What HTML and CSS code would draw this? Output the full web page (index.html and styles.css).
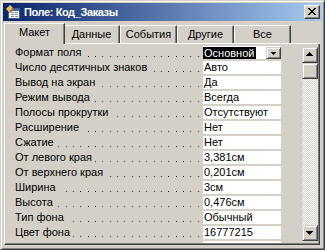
FILE: index.html
```html
<!DOCTYPE html>
<html>
<head>
<meta charset="utf-8">
<link rel="stylesheet" href="styles.css">
</head>
<body>
<div class="window">
  <div class="titlebar">
    <svg class="ticon" width="16" height="16" viewBox="0 0 16 16" shape-rendering="crispEdges">
      <rect x="3" y="4" width="12" height="11" fill="#4a5a88"/>
      <rect x="4" y="5" width="10" height="9" fill="#ffffff"/>
      <rect x="4" y="5" width="10" height="2" fill="#3a6ea5"/>
      <rect x="6" y="8" width="3" height="1" fill="#7b8fbf"/>
      <rect x="10" y="8" width="3" height="1" fill="#7b8fbf"/>
      <rect x="6" y="10" width="3" height="1" fill="#7b8fbf"/>
      <rect x="10" y="10" width="3" height="1" fill="#7b8fbf"/>
      <rect x="6" y="12" width="3" height="1" fill="#7b8fbf"/>
      <rect x="10" y="12" width="3" height="1" fill="#7b8fbf"/>
      <polygon points="1,5 5,1 8,4 4,8" fill="#e8c34a" shape-rendering="auto"/>
      <polygon points="4,8 8,4 9,5 5,9" fill="#9a6a1a" shape-rendering="auto"/>
    </svg>
    <span class="title">Поле: Код_Заказы</span>
    <div class="close">
      <svg class="xglyph" width="8" height="7" viewBox="0 0 8 7" shape-rendering="crispEdges">
        <rect x="0" y="0" width="2" height="1"/><rect x="6" y="0" width="2" height="1"/>
        <rect x="1" y="1" width="2" height="1"/><rect x="5" y="1" width="2" height="1"/>
        <rect x="2" y="2" width="4" height="1"/>
        <rect x="3" y="3" width="2" height="1"/>
        <rect x="2" y="4" width="4" height="1"/>
        <rect x="1" y="5" width="2" height="1"/><rect x="5" y="5" width="2" height="1"/>
        <rect x="0" y="6" width="2" height="1"/><rect x="6" y="6" width="2" height="1"/>
      </svg>
    </div>
  </div>
  <div class="tabs">
    <div class="tab active">Макет</div>
    <div class="tab">Данные</div>
    <div class="tab">События</div>
    <div class="tab">Другие</div>
    <div class="tab">Все</div>
  </div>
  <div class="panel">
    <div class="list">
      <div class="row"><div class="label"><span class="name">Формат поля</span></div><div class="value combo"><span class="sel">Основной</span><span class="drop"><svg class="darrow" width="5" height="3" viewBox="0 0 5 3" shape-rendering="crispEdges"><rect x="0" y="0" width="5" height="1"/><rect x="1" y="1" width="3" height="1"/><rect x="2" y="2" width="1" height="1"/></svg></span></div></div>
      <div class="row"><div class="label"><span class="name">Число десятичных знаков</span></div><div class="value">Авто</div></div>
      <div class="row"><div class="label"><span class="name">Вывод на экран</span></div><div class="value">Да</div></div>
      <div class="row"><div class="label"><span class="name">Режим вывода</span></div><div class="value">Всегда</div></div>
      <div class="row"><div class="label"><span class="name">Полосы прокрутки</span></div><div class="value">Отсутствуют</div></div>
      <div class="row"><div class="label"><span class="name">Расширение</span></div><div class="value">Нет</div></div>
      <div class="row"><div class="label"><span class="name">Сжатие</span></div><div class="value">Нет</div></div>
      <div class="row"><div class="label"><span class="name">От левого края</span></div><div class="value">3,381см</div></div>
      <div class="row"><div class="label"><span class="name">От верхнего края</span></div><div class="value">0,201см</div></div>
      <div class="row"><div class="label"><span class="name">Ширина</span></div><div class="value">3см</div></div>
      <div class="row"><div class="label"><span class="name">Высота</span></div><div class="value">0,476см</div></div>
      <div class="row"><div class="label"><span class="name">Тип фона</span></div><div class="value">Обычный</div></div>
      <div class="row"><div class="label"><span class="name">Цвет фона</span></div><div class="value">16777215</div></div>
      <div class="row"><div class="label"></div><div class="value"></div></div>
    </div>
    <div class="scroll">
      <div class="sbtn up"><svg class="arrow" width="7" height="4" viewBox="0 0 7 4" shape-rendering="crispEdges"><rect x="3" y="0" width="1" height="1"/><rect x="2" y="1" width="3" height="1"/><rect x="1" y="2" width="5" height="1"/><rect x="0" y="3" width="7" height="1"/></svg></div>
      <div class="thumb"></div>
      <div class="track"></div>
      <div class="sbtn down"><svg class="arrow" width="7" height="4" viewBox="0 0 7 4" shape-rendering="crispEdges"><rect x="0" y="0" width="7" height="1"/><rect x="1" y="1" width="5" height="1"/><rect x="2" y="2" width="3" height="1"/><rect x="3" y="3" width="1" height="1"/></svg></div>
    </div>
  </div>
</div>
</body>
</html>
```

FILE: styles.css
```css
* { box-sizing: border-box; }
html, body { margin: 0; padding: 0; }
body {
  width: 325px;
  height: 250px;
  overflow: hidden;
  background: #d4d0c8;
  font-family: "Liberation Sans", Arial, sans-serif;
  font-size: 11px;
  color: #000;
}
.window {
  width: 325px;
  height: 250px;
  display: flex;
  flex-direction: column;
  background: #d4d0c8;
  border: 1px solid;
  border-color: #d4d0c8 #404040 #404040 #d4d0c8;
  box-shadow: inset 1px 1px #fff, inset -1px -1px #808080;
  padding: 2px;
}
.titlebar {
  flex: none;
  height: 18px;
  display: flex;
  align-items: center;
  background: linear-gradient(to right, #0a246a, #a6caf0);
}
.ticon { flex: none; display: block; margin-left: 2px; }
.title {
  margin-left: 3px;
  color: #fff;
  font-weight: bold;
  line-height: 13px;
  letter-spacing: -0.4px;
  white-space: nowrap;
}
.close {
  flex: none;
  margin-left: auto;
  margin-right: 2px;
  width: 16px;
  height: 14px;
  background: #d4d0c8;
  border: 1px solid;
  border-color: #fff #404040 #404040 #fff;
  box-shadow: inset -1px -1px #808080;
  padding: 2px 0 0 3px;
}
.xglyph { display: block; fill: #000; }

.tabs {
  flex: none;
  height: 23px;
  margin: 0 2px 0 1px;
  border-bottom: 1px solid #fff;
  display: flex;
  align-items: flex-end;
}
.tab {
  flex: none;
  width: 57px;
  height: 18px;
  border: 1px solid;
  border-bottom: 0;
  border-color: #fff #404040 #fff #fff;
  box-shadow: inset -1px 0 #808080;
  background: #d4d0c8;
  text-align: center;
  padding-top: 2px;
  line-height: 13px;
  white-space: nowrap;
}
.tab.active {
  width: 61px;
  height: 21px;
  margin-bottom: -1px;
  margin-right: -2px;
  z-index: 1;
}

.panel {
  flex: 1;
  min-height: 0;
  margin: 0 2px 2px 1px;
  border: 1px solid;
  border-top: 0;
  border-color: #fff #404040 #404040 #fff;
  box-shadow: inset -1px -1px #808080;
  padding: 0 1px 1px 0;
  display: flex;
}
.list {
  flex: 1;
  min-width: 0;
  overflow: hidden;
  padding-top: 2px;
}
.row {
  display: flex;
  height: 13px;
  margin-bottom: 2px;
  line-height: 13px;
  white-space: nowrap;
}
.label {
  flex: none;
  width: 186px;
  margin-left: 10px;
  overflow: hidden;
  background-image: linear-gradient(to right,
    transparent 6px, #000 6px 7px,
    transparent 7px 13px, #000 13px 14px,
    transparent 14px 21px, #000 21px 22px);
  background-size: 22px 1px;
  background-repeat: repeat-x;
  background-position: right 2px top 10px;
}
.name { background: #d4d0c8; padding-right: 3px; }
.value {
  flex: none;
  width: 78px;
  margin-left: 2px;
  background: #fff;
  padding-left: 1px;
  overflow: hidden;
}
.value.combo {
  padding-left: 0;
  display: flex;
  align-items: flex-end;
}
.sel {
  height: 12px;
  line-height: 12px;
  background: #000;
  color: #fff;
  padding: 0 2px 0 1px;
}
.drop {
  margin-left: auto;
  width: 15px;
  height: 12px;
  background: #d4d0c8;
  border: 1px solid;
  border-color: #d4d0c8 #404040 #404040 #d4d0c8;
  box-shadow: inset 1px 1px #fff, inset -1px -1px #808080;
  padding: 4px 0 0 4px;
}
.darrow { display: block; fill: #000; }

.scroll {
  flex: none;
  width: 16px;
  margin: 3px 0 2px;
  display: flex;
  flex-direction: column;
}
.sbtn, .thumb {
  flex: none;
  height: 16px;
  background: #d4d0c8;
  border: 1px solid;
  border-color: #d4d0c8 #404040 #404040 #d4d0c8;
  box-shadow: inset 1px 1px #fff, inset -1px -1px #808080;
}
.sbtn { padding-left: 3px; }
.sbtn.up { padding-top: 4px; }
.sbtn.down { padding-top: 5px; }
.arrow { display: block; fill: #000; }
.track {
  flex: 1;
  background: repeating-conic-gradient(#fff 0 25%, #d4d0c8 0 50%) 0 0 / 2px 2px;
}
```
